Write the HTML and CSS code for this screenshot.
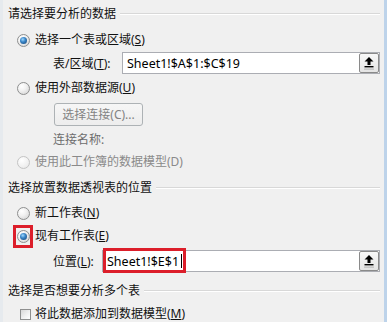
FILE: index.html
```
<!DOCTYPE html>
<html lang="zh-CN">
<head>
<meta charset="utf-8">
<title>创建数据透视表</title>
<link rel="stylesheet" href="styles.css">
</head>
<body>
<div class="win">
  <div class="row heading"><span>请选择要分析的数据</span><i class="rule"></i></div>

  <div class="row opt mt6"><span class="radio checked"></span><span>选择一个表或区域(<u>S</u>)</span></div>

  <div class="field mt2">
    <span class="lbl lbl-range">表/区域(<u>T</u>):</span>
    <div class="input">
      <span class="val">Sheet1!$A$1:$C$19</span>
      <span class="pick"><svg width="12" height="14" viewBox="0 0 12 14"><path d="M6 1 L1.5 5.5 H4.5 V9 H7.5 V5.5 H10.5 Z" fill="#000"/><rect x="1.5" y="10" width="9" height="1.4" fill="#000"/><rect x="1" y="12.6" width="10" height="1" fill="#b4b4b4"/></svg></span>
    </div>
  </div>

  <div class="row opt mt4"><span class="radio"></span><span>使用外部数据源(<u>U</u>)</span></div>

  <div class="btn mt5">选择连接(C)...</div>

  <div class="row sub mt4">连接名称:</div>

  <div class="row opt disabled mt2"><span class="radio off"></span><span>使用此工作簿的数据模型(D)</span></div>

  <div class="row heading mt6"><span>选择放置数据透视表的位置</span><i class="rule"></i></div>

  <div class="row opt mt5"><span class="radio"></span><span>新工作表(<u>N</u>)</span></div>

  <div class="row opt mt3"><span class="radio checked"><span class="mark-radio"></span></span><span>现有工作表(<u>E</u>)</span></div>

  <div class="field mt4">
    <span class="lbl lbl-pos">位置(<u>L</u>):</span>
    <div class="input pos">
      <span class="mark-input"></span>
      <span class="val">Sheet1!$E$1<span class="caret"></span></span>
      <span class="pick"><svg width="12" height="14" viewBox="0 0 12 14"><path d="M6 1 L1.5 5.5 H4.5 V9 H7.5 V5.5 H10.5 Z" fill="#000"/><rect x="1.5" y="10" width="9" height="1.4" fill="#000"/><rect x="1" y="12.6" width="10" height="1" fill="#b4b4b4"/></svg></span>
    </div>
  </div>

  <div class="row heading mt9"><span>选择是否想要分析多个表</span><i class="rule"></i></div>

  <div class="row opt chk mt3"><span class="check"></span><span>将此数据添加到数据模型(<u>M</u>)</span></div>
</div>
</body>
</html>
```
FILE: styles.css
```
html, body {
  margin: 0;
  padding: 0;
}
body {
  width: 387px;
  height: 322px;
  overflow: hidden;
  background: #f0f0f0;
  font-family: "Noto Sans", "Noto Sans CJK SC", sans-serif;
  font-size: 12px;
  color: #111;
}
u { text-decoration: underline; text-underline-offset: 1px; }

.win {
  display: flex;
  flex-direction: column;
  height: 322px;
  box-sizing: border-box;
  border-left: 3px solid #e6eaee;
  border-right: 3px solid #bdd3ea;
  padding: 4px 4px 0 5px;
}

.row {
  flex: none;
  height: 20px;
  line-height: 20px;
  display: flex;
  align-items: center;
  white-space: nowrap;
}
.mt2 { margin-top: 2px; }
.mt3 { margin-top: 3px; }
.mt4 { margin-top: 4px; }
.mt5 { margin-top: 5px; }
.mt6 { margin-top: 6px; }
.mt9 { margin-top: 9px; }

.heading .rule {
  flex: 1;
  height: 0;
  margin: -1px 0 0 4px;
  border-top: 1px solid #d8d8d8;
  border-bottom: 1px solid #ffffff;
}

.opt {
  padding-left: 9px;
  gap: 5px;
}
.opt.disabled { color: #8a8a8a; }

.radio {
  position: relative;
  flex: none;
  width: 13px;
  height: 13px;
  box-sizing: border-box;
  border-radius: 50%;
  border: 1px solid #8e8f8f;
  background: radial-gradient(circle at 35% 30%, #ffffff 0%, #f2f2f2 40%, #cfcfcf 100%);
}
.radio.checked::after {
  content: "";
  position: absolute;
  left: 2px;
  top: 2px;
  width: 7px;
  height: 7px;
  border-radius: 50%;
  background: radial-gradient(circle at 40% 35%, #9fd8ff 0%, #3a86c8 40%, #153f6e 100%);
}
.radio.off {
  border-color: #c4c4c4;
  background: radial-gradient(circle at 35% 30%, #ffffff 0%, #f0f0f0 60%, #e2e2e2 100%);
}

.check {
  flex: none;
  width: 11px;
  height: 11px;
  box-sizing: border-box;
  margin-left: 3px;
  border: 1px solid #8e8f8f;
  background: linear-gradient(135deg, #d8d8d8 0%, #f2f2f2 60%, #ffffff 100%);
}
.chk { gap: 4px; }

.field {
  flex: none;
  display: flex;
  align-items: center;
  height: 22px;
  padding-left: 45px;
  gap: 7px;
  white-space: nowrap;
}
.lbl { flex: none; }
.lbl-range { width: 62px; }
.lbl-pos { width: 42px; }
.input {
  flex: 1;
  height: 22px;
  box-sizing: border-box;
  display: flex;
  align-items: center;
  background: #fff;
  border: 1px solid #abadb3;
  padding-left: 4px;
}
.val {
  flex: 1;
  display: flex;
  align-items: center;
  font-size: 12.5px;
  color: #000;
}
.pick {
  flex: none;
  width: 20px;
  height: 20px;
  box-sizing: border-box;
  display: flex;
  align-items: center;
  justify-content: center;
  border: 1px solid #8a8a8a;
  border-radius: 2px;
  background: linear-gradient(#f8f8f8, #e4e4e4);
}
.input.pos { position: relative; }
.caret {
  display: inline-block;
  width: 1px;
  height: 14px;
  margin-left: 2px;
  background: #000;
}
.mark-input {
  position: absolute;
  left: 0;
  top: -3px;
  width: 83px;
  height: 25px;
  box-sizing: border-box;
  border: 3px solid #dc1e2a;
}
.mark-radio {
  position: absolute;
  left: -5px;
  top: -6px;
  width: 20px;
  height: 23px;
  box-sizing: border-box;
  border: 3px solid #dc1e2a;
}

.btn {
  flex: none;
  width: 89px;
  height: 23px;
  line-height: 21px;
  box-sizing: border-box;
  margin-left: 46px;
  text-align: center;
  color: #838383;
  border: 1px solid #adb2b5;
  border-radius: 3px;
  background: linear-gradient(#f6f6f6, #ededed);
}

.sub {
  padding-left: 45px;
  color: #6d6d6d;
}
```
